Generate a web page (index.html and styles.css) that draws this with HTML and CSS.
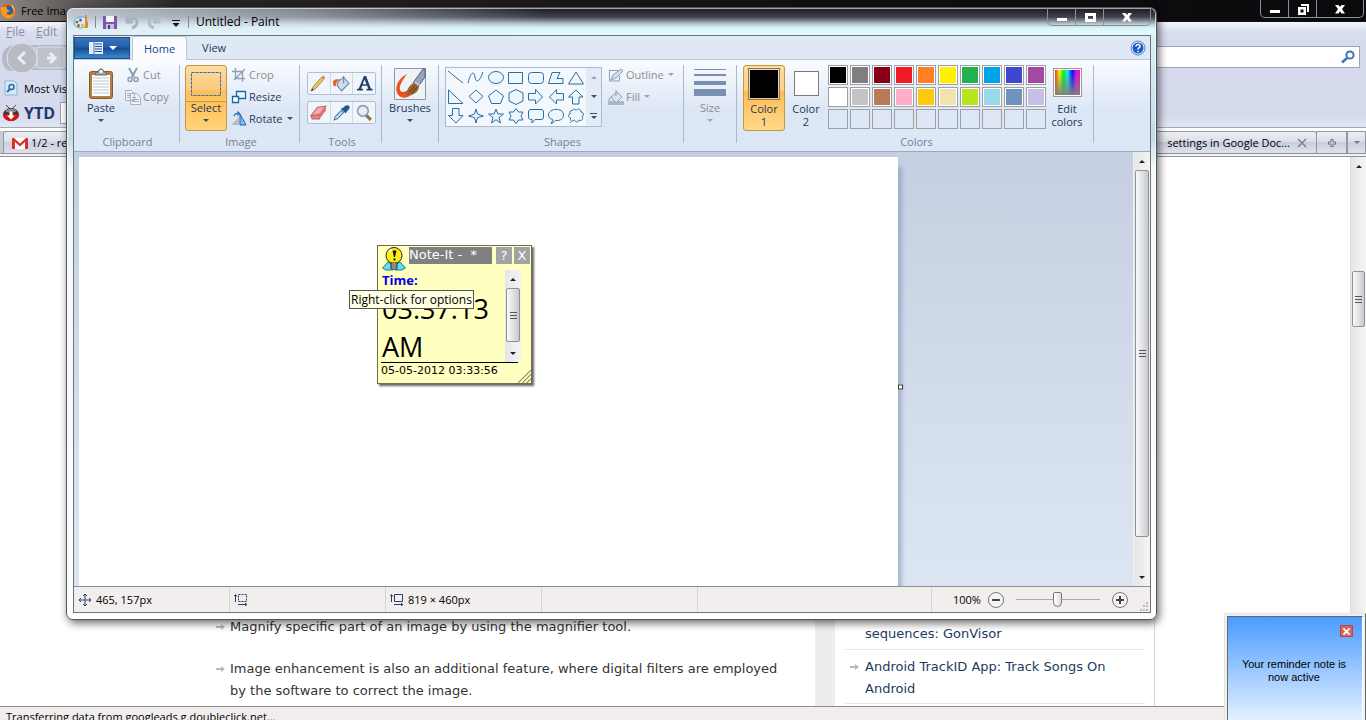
FILE: index.html
```html
<!DOCTYPE html>
<html lang="en">
<head>
    <meta charset="UTF-8">
    <meta name="viewport" content="width=device-width, initial-scale=1.0">
    <title>Untitled - Paint</title>
    <link rel="stylesheet" href="styles.css">
</head>
<body>
    <div class="browser">
        <header class="browser-title">
            <svg class="icon16" viewBox="0 0 16 16"><circle cx="8" cy="8" r="7.5" fill="#e8661a"/><circle cx="8.5" cy="7" r="4.6" fill="#2c5ea8"/><path d="M1 4C0 10 3 15 8 15.5c4 0 7-3 7.300-7-1 3-4 4.500-6.500 3.500C6 11 6.500 9 8 9l2-1C8 7 6 6 7 4 5 3 3 5 1 4z" fill="#f59a22"/><path d="M11 1c3 2 4 5 3.500 8-1-2-2-4-3.500-8z" fill="#ffd03a"/></svg>
            <span>Free Ima</span>
            <div class="window-buttons">
                <button aria-label="Minimize"><svg viewBox="0 0 14 12"><path d="M2 7h10v3H2z"/></svg></button>
                <button aria-label="Restore"><svg viewBox="0 0 14 12"><path d="M5 1h8v8h-2V3H5zM2 4h8v8H2zm2.500 2.500v3h3v-3z" fill-rule="evenodd"/></svg></button>
                <button class="close" aria-label="Close"><svg viewBox="0 0 14 12"><path d="M2 2h3.500L7 4l1.500-2H12L9 6l3 4.500H8.500L7 8.200l-1.500 2.300H2L5 6z"/></svg></button>
            </div>
        </header>
        <nav class="browser-menu">
            <a href="#file"><u>F</u>ile</a>
            <a href="#edit"><u>E</u>dit</a>
        </nav>
        <div class="browser-nav">
            <svg class="back-forward" viewBox="0 0 72 32"><path d="M18 3h54v25H18C6 32 2 24 2 16 2 8 8 2 18 3z" fill="#b6bac8"/><path d="M18 5h54v21H18z" fill="#c6cad6"/><rect x="37" y="5" width="27" height="21" rx="2" fill="#bfc2cb" stroke="#dcdfe8"/><circle cx="22" cy="16" r="15" fill="#b9bbc2" stroke="#dfe1e8"/><path d="M25 10l-6 6 6 6M50 11l5 5-5 5M47 16h8" fill="none" stroke="#eceef3" stroke-width="3"/></svg>
            <label class="search">
                <input type="text" aria-label="Search">
                <svg class="icon16" viewBox="0 0 16 16"><circle cx="10" cy="6" r="3.600" fill="none" stroke="#3b76b4" stroke-width="2"/><path d="M7 9l-5 4.500" stroke="#3b76b4" stroke-width="2.500"/></svg>
            </label>
        </div>
        <div class="bookmarks">
            <svg class="icon16" viewBox="0 0 16 16"><path d="M2 1h9l3 3v11H2z" fill="#d5e9fa" stroke="#8bb5db"/><circle cx="8.500" cy="7" r="2.500" fill="none" stroke="#33679f" stroke-width="1.500"/><path d="M7 9l-3 3" stroke="#33679f" stroke-width="2"/></svg>
            <a href="#most-visited">Most Visited</a>
        </div>
        <div class="ytd-bar">
            <svg class="icon16" viewBox="0 0 16 16"><path d="M3 0l4 4M13 0L9 4" stroke="#444"/><ellipse cx="8" cy="9.500" rx="8" ry="6.500" fill="#3a3a3c"/><path d="M2 6c3-3 9-3 12 0-3 2-9 2-12 0z" fill="#8b8b90"/><path d="M0 9.500h16c0 3-3 6.500-8 6.500s-8-3.500-8-6.500z" fill="#d11"/><path d="M6.500 6.500h3v4H12l-4 4-4-4h2.500z" fill="#fff"/></svg>
            <strong>YTD</strong>
            <input type="text" aria-label="YTD search">
        </div>
        <div class="browser-tabs">
            <div class="tab">
                <svg class="icon16" viewBox="0 0 16 16"><path d="M0 3h16v11H0z" fill="#fff"/><path d="M0 3h2l6 5.500L14 3h2v11h-3V7L8 11.500 3 7v7H0z" fill="#d9302c"/></svg>
                <span>1/2 - re</span>
            </div>
            <div class="tab last">
                <span>settings in Google Doc...</span>
                <button aria-label="Close tab"><svg viewBox="0 0 10 10"><path d="M1 1l8 8M9 1L1 9" stroke="#808080" stroke-width="1.500"/></svg></button>
            </div>
            <button class="tab-add" aria-label="New tab"><svg viewBox="0 0 10 10"><path d="M5 1v8M1 5h8" stroke="#777" stroke-width="3"/><path d="M5 2v6M2 5h6" stroke="#e4e4e4"/></svg></button>
            <button class="tab-list" aria-label="List tabs"><i class="arrow"></i></button>
        </div>
        <main class="viewport">
            <div class="page">
                <article>
                    <ul>
                        <li>Magnify specific part of an image by using the magnifier tool.</li>
                        <li>Image enhancement is also an additional feature, where digital filters are employed by the software to correct the image.</li>
                    </ul>
                </article>
                <aside>
                    <ul>
                        <li><a href="#gonvisor">sequences: GonVisor</a></li>
                        <li class="marked"><a href="#trackid">Android TrackID App: Track Songs On Android</a></li>
                    </ul>
                </aside>
            </div>
            <div class="scrollbar page-scroll">
                <button aria-label="Scroll up"><i class="arrow up"></i></button>
                <div class="thumb"><i></i></div>
            </div>
        </main>
        <footer class="browser-status">Transferring data from googleads.g.doubleclick.net...</footer>
    </div>

    <div class="paint">
        <header class="paint-title">
            <svg class="icon16" viewBox="0 0 16 16"><path d="M1 9c0-4 4-6 8-6 3 0 5 2 5 5 0 4-3 6-7 6-3 0-6-2-6-5z" fill="#d9ecf8" stroke="#6b9bc4"/><circle cx="4" cy="8" r="1.500" fill="#3b9b3b"/><circle cx="7.500" cy="6" r="1.500" fill="#2b62c9"/><circle cx="5.500" cy="11.500" r="1.500" fill="#d94b2b"/><circle cx="9.500" cy="11" r="1.500" fill="#eeb422"/><path d="M12 1h2v7h1v6h-3V8z" fill="#e78624"/></svg>
            <i class="divider"></i>
            <button aria-label="Save"><svg viewBox="0 0 16 16"><path d="M1 2h14v13H1z" fill="#7a58b0"/><path d="M4 2h8v6H4z" fill="#f5f5fb"/><path d="M4 10h8v5H4z" fill="#cbbfe4"/><path d="M6 11h2v4H6z" fill="#50348a"/></svg></button>
            <button aria-label="Undo"><svg viewBox="0 0 16 16"><path d="M3 2v6h6M4 7c4-5 9-3 9 1 0 3-2 5-5 6" fill="none" stroke="#a8b2c4" stroke-width="3"/></svg></button>
            <button aria-label="Redo"><svg viewBox="0 0 16 16"><path d="M13 2v6H7M12 7C8 2 3 4 3 8c0 3 2 5 5 6" fill="none" stroke="#b3bccb" stroke-width="3"/></svg></button>
            <button class="customize" aria-label="Customize Quick Access Toolbar"><svg viewBox="0 0 16 16"><path d="M4 6h8v1H4zM4.500 9h7L8 13z" fill="#111"/></svg></button>
            <i class="divider"></i>
            <h1>Untitled - Paint</h1>
            <div class="window-buttons">
                <button aria-label="Minimize"><svg viewBox="0 0 14 12"><path d="M2 7h10v3H2z"/></svg></button>
                <button aria-label="Maximize"><svg viewBox="0 0 14 12"><path d="M2 2h11v9H2zm3 3v3h5V5z" fill-rule="evenodd"/></svg></button>
                <button class="close" aria-label="Close"><svg viewBox="0 0 14 12"><path d="M2 2h3.500L7 4l1.500-2H12L9 6l3 4.500H8.500L7 8.200l-1.500 2.300H2L5 6z"/></svg></button>
            </div>
        </header>
        <div class="paint-body">
            <nav class="ribbon-tabs">
                <button class="file-tab" aria-label="Paint menu"><svg viewBox="0 0 16 12"><path d="M1 0h14v12H1z" fill="#e8eef8"/><path d="M7 2h7M7 4.500h7M7 7h7M7 9.500h7" stroke="#1f4f9c"/><path d="M6 0v12" stroke="#4a7ac0"/></svg><i class="arrow"></i></button>
                <a class="active" href="#home">Home</a>
                <a href="#view">View</a>
                <button class="help" aria-label="Help"><svg viewBox="0 0 16 16"><circle cx="8" cy="8" r="7" fill="#eaf2fd" stroke="#4f7fc7"/><circle cx="8" cy="8" r="5.500" fill="#1c58cd"/><path d="M6 6.500c0-3 4.500-2.500 4 0C9.700 7.700 8 7.600 8 9.500M8 10.800v1.500" fill="none" stroke="#fff" stroke-width="1.500"/></svg></button>
            </nav>
            <div class="ribbon">
                <section class="group clipboard">
                    <div class="controls">
                        <button class="big"><svg viewBox="0 0 32 32"><rect x="4.500" y="3.500" width="23" height="27" rx="2" fill="#b87e40" stroke="#8a5a2a"/><path d="M7 7h18v21H7z" fill="#fff"/><path d="M8 10h16M8 13h16M8 16h16M8 19h16M8 22h16M8 25h16" stroke="#bcc6d2"/><path d="M10 7c0-3 3-2 3.500-4 1-3 4-3 5 0 .500 2 3.500 1 3.500 4z" fill="#a5a9ae" stroke="#666"/><circle cx="16" cy="3.500" r="1.500" fill="#fff"/></svg><span>Paste</span><i class="arrow"></i></button>
                        <div class="stack">
                            <button disabled><svg viewBox="0 0 16 16"><path d="M4 1l5 9M12 1l-5 9" stroke="#8e9cb0" stroke-width="2"/><circle cx="5" cy="12.500" r="2" fill="none" stroke="#8e9cb0" stroke-width="1.500"/><circle cx="11" cy="12.500" r="2" fill="none" stroke="#8e9cb0" stroke-width="1.500"/></svg>Cut</button>
                            <button disabled><svg viewBox="0 0 16 16"><path d="M.500 1.500h6l3 3v7h-9zM5.500 4.500h6l4 4v7h-10z" fill="#eef2f8" stroke="#a6b1c4"/><path d="M2 4.500h3M2 6.500h3M2 8.500h3M7 8.500h4M7 10.500h7M7 12.500h7" stroke="#a6b1c4"/></svg>Copy</button>
                        </div>
                    </div>
                    <h2>Clipboard</h2>
                </section>
                <section class="group image">
                    <div class="controls">
                        <button class="big selected split"><svg viewBox="0 0 32 32"><rect x="1.500" y="4.500" width="29" height="23" fill="none" stroke="#2b6cab" stroke-dasharray="3 1"/></svg><span>Select</span><i class="arrow"></i></button>
                        <div class="stack">
                            <button disabled><svg viewBox="0 0 16 16"><path d="M4.500 1v10.500H14M1 4.500h10.500V15M3 13L14 2" fill="none" stroke="#8e9cb5" stroke-width="1.300"/></svg>Crop</button>
                            <button><svg viewBox="0 0 16 16"><path d="M5.500 2.500h9v7h-9z" fill="#eaf4ff" stroke="#1b65a9" stroke-width="1.300"/><path d="M1.500 7.500h6v6h-6z" fill="#fff" stroke="#1b65a9" stroke-width="1.300"/></svg>Resize</button>
                            <button><svg viewBox="0 0 16 16"><path d="M0 14l8-8v8z" fill="#b5bcc7"/><path d="M9 14V3l6 11z" fill="#7fc0ec" stroke="#1b65a9"/><path d="M3 5c1-3 3-3 5-2.500M6.500.500l2 2-2 2" fill="none" stroke="#2372be" stroke-width="1.300"/></svg>Rotate<i class="arrow"></i></button>
                        </div>
                    </div>
                    <h2>Image</h2>
                </section>
                <section class="group tools">
                    <div class="controls">
                        <div class="tool-row">
                            <button aria-label="Pencil"><svg viewBox="0 0 16 16"><path d="M1 15l2-4 8-9 2 2-8 9z" fill="#f2c94f" stroke="#8a6a32" stroke-width=".7"/><path d="M11 2l1.500-1.500 2 2L13 4z" fill="#e27862"/><path d="M1 15l1-2.500L3.500 14z" fill="#333"/></svg></button>
                            <button aria-label="Fill with color"><svg viewBox="0 0 16 16"><path d="M5 6l5-4 5 6-7 7-4-5z" fill="#c9dff1" stroke="#6f879f"/><path d="M10 8V1" stroke="#6f879f"/><path d="M0 6c2-3 6-2 8-1-4 0-5 2-5 5-3 2-3-2-3-4z" fill="#e8642c"/></svg></button>
                            <button aria-label="Text"><svg viewBox="0 0 16 16"><path d="M7.500 1h2l4.500 12h1.500v1.500H10V13h1.500l-1-3H5.800l-1 3H6.500v1.500H1V13h1.500zM8 4L6.300 8.700h3.600z" fill="#1f3e68"/></svg></button>
                        </div>
                        <div class="tool-row">
                            <button aria-label="Eraser"><svg viewBox="0 0 16 16"><path d="M1 11l6-8 8-1-6 8z" fill="#f6a8a4" stroke="#c26a68"/><path d="M1 11l8-1v4H2z" fill="#ee8581" stroke="#c26a68"/><path d="M9 10l6-8v4l-6 8z" fill="#df7470"/></svg></button>
                            <button aria-label="Color picker"><svg viewBox="0 0 16 16"><path d="M1 15l1-3 6-6 2 2-6 6z" fill="#c5e4f8" stroke="#547a9b"/><path d="M7 4l5 5 1-2 2-2c2-3-1-5-4-3L9 4z" fill="#24578f"/></svg></button>
                            <button aria-label="Magnifier"><svg viewBox="0 0 16 16"><path d="M9 10l5 5" stroke="#9a7144" stroke-width="3"/><circle cx="6.500" cy="6.500" r="5" fill="#e2f0fb" stroke="#8d9cab" stroke-width="1.500"/></svg></button>
                        </div>
                    </div>
                    <h2>Tools</h2>
                </section>
                <section class="group brushes">
                    <div class="controls">
                        <button class="big"><svg viewBox="0 0 32 32"><path d="M.500.500h31v31H.500z" fill="#eef2f5" stroke="#8d98a5"/><path d="M13 6C6 9 0 18 3 25c3 6 9 6 16 1l-4-4c-4 2-8 3-9 0-1-4 2-9 7-16z" fill="#e65322"/><path d="M19 15L29 1h2v8l-7 10z" fill="#96a5b9" stroke="#53647a"/><path d="M21 14l5 3" stroke="#e6edf4"/><path d="M12 27c1-6 4-11 8-12l5 4c-1 6-7 9-13 8z" fill="#9b6230"/><path d="M15 24l6-6M18 25l5-6" stroke="#623712"/></svg><span>Brushes</span><i class="arrow"></i></button>
                    </div>
                </section>
                <section class="group shapes">
                    <div class="controls">
                        <div class="gallery">
                            <div class="shape-grid">
                                <button aria-label="Line"><svg viewBox="0 0 18 18"><path d="M1 2l15 12"/></svg></button>
                                <button aria-label="Curve"><svg viewBox="0 0 18 18"><path d="M1 14C4 2 7 2 8 8s4 6 8-5"/></svg></button>
                                <button aria-label="Oval"><svg viewBox="0 0 18 18"><ellipse cx="9" cy="8.500" rx="7.500" ry="6"/></svg></button>
                                <button aria-label="Rectangle"><svg viewBox="0 0 18 18"><path d="M1.500 3.500h14v11h-14z"/></svg></button>
                                <button aria-label="Rounded rectangle"><svg viewBox="0 0 18 18"><rect x="1.500" y="3.500" width="15" height="11" rx="3"/></svg></button>
                                <button aria-label="Polygon"><svg viewBox="0 0 18 18"><path d="M5 3.500h8l-3 6h6v5H1.500z"/></svg></button>
                                <button aria-label="Triangle"><svg viewBox="0 0 18 18"><path d="M9 3l7.500 12h-15z"/></svg></button>
                                <button aria-label="Right triangle"><svg viewBox="0 0 18 18"><path d="M1.500 2v13.500H16z"/></svg></button>
                                <button aria-label="Diamond"><svg viewBox="0 0 18 18"><path d="M9 2l7 6.500L9 15 2 8.500z"/></svg></button>
                                <button aria-label="Pentagon"><svg viewBox="0 0 18 18"><path d="M9 2l7.500 6-3 7.500h-9L1.500 8z"/></svg></button>
                                <button aria-label="Hexagon"><svg viewBox="0 0 18 18"><path d="M9 1.500L16 5v8l-7 3.500L2 13V5z"/></svg></button>
                                <button aria-label="Right arrow"><svg viewBox="0 0 18 18"><path d="M1.500 5.500h7v-4l7 7.500-7 7v-4h-7z"/></svg></button>
                                <button aria-label="Left arrow"><svg viewBox="0 0 18 18"><path d="M16.500 5.500h-7v-4L2.500 9l7 7v-4h7z"/></svg></button>
                                <button aria-label="Up arrow"><svg viewBox="0 0 18 18"><path d="M5.500 16V9h-4L9 2l7 7h-4v7z"/></svg></button>
                                <button aria-label="Down arrow"><svg viewBox="0 0 18 18"><path d="M5.500 1.500v7h-4L9 16l7-7.500h-4v-7z"/></svg></button>
                                <button aria-label="Four-point star"><svg viewBox="0 0 18 18"><path d="M9 2l1.500 5 6 2-6 1.500L9 16l-1.500-5.500-6-1.500 6-2z"/></svg></button>
                                <button aria-label="Five-point star"><svg viewBox="0 0 18 18"><path d="M9 2l1.800 5h5.700L12 10.500l1.500 5.500L9 12.700 4.500 16 6 10.500 1.500 7h5.700z"/></svg></button>
                                <button aria-label="Six-point star"><svg viewBox="0 0 18 18"><path d="M9 1.500L11.500 5H16l-2 4 2 4h-4.500L9 16.500 6.500 13H2l2-4-2-4h4.500z"/></svg></button>
                                <button aria-label="Rounded callout"><svg viewBox="0 0 18 18"><path d="M4 2.500h10c2 0 2.500 1 2.500 2.500v5c0 2-1 2.500-2.500 2.500H8L5 16v-3.500c-2 0-3.500 0-3.500-2.500V5c0-2 1-2.500 2.500-2.500z"/></svg></button>
                                <button aria-label="Oval callout"><svg viewBox="0 0 18 18"><path d="M6 13L4 16.500c1 0 3-1.500 4.500-3 5 .500 8-2 8-5.500 0-8-15-7-15 0 0 2 2 4 4.500 5z"/></svg></button>
                                <button aria-label="Cloud callout"><svg viewBox="0 0 18 18"><path d="M5 4c1-3 4-2 4-.500C11 1 14 2 14 5c3 0 3 4 1 4.500 2 3-1 5-3 3.500-1 3-4 2-4.500 0-2 2-5 1-4-2-3-1-2.500-4 0-4.500C2 5 3 3 5 4zM3.500 15v1"/></svg></button>
                            </div>
                            <div class="gallery-scroll">
                                <button aria-label="Row up" disabled><i class="arrow up"></i></button>
                                <button aria-label="Row down"><i class="arrow"></i></button>
                                <button class="more" aria-label="More shapes"><i class="arrow"></i></button>
                            </div>
                        </div>
                        <div class="stack">
                            <button disabled><svg viewBox="0 0 16 16"><path d="M1.500 3.500h9M1.500 3v11h10V9" fill="none" stroke="#8fa0b8"/><path d="M3 13l2-5 8-6 2 2-7 7z" fill="#d4dce7" stroke="#8fa0b8"/></svg>Outline<i class="arrow"></i></button>
                            <button disabled><svg viewBox="0 0 16 16"><path d="M0 12h16v4H0z" fill="#a9b6cb"/><path d="M3 8l6-5 5 5-6 6z" fill="#dce3ed" stroke="#8fa0b8"/><path d="M8 7V1M3 8c-2 1-2 3-2 4" stroke="#8fa0b8" fill="none"/></svg>Fill<i class="arrow"></i></button>
                        </div>
                    </div>
                    <h2>Shapes</h2>
                </section>
                <section class="group size">
                    <div class="controls">
                        <button class="big" disabled><svg viewBox="0 0 32 32"><path d="M0 1h32v1H0zM0 6h32v2H0zM0 13h32v4H0zM0 21h32v7H0z" fill="#7b8fb2"/></svg><span>Size</span><i class="arrow"></i></button>
                    </div>
                </section>
                <section class="group colors">
                    <div class="controls">
                        <button class="big selected"><i class="well first"></i><span>Color<br>1</span></button>
                        <button class="big"><i class="well second"></i><span>Color<br>2</span></button>
                        <div class="palette">
                            <button class="black" aria-label="Black"></button>
                            <button class="gray" aria-label="Gray"></button>
                            <button class="dark-red" aria-label="Dark red"></button>
                            <button class="red" aria-label="Red"></button>
                            <button class="orange" aria-label="Orange"></button>
                            <button class="yellow" aria-label="Yellow"></button>
                            <button class="green" aria-label="Green"></button>
                            <button class="turquoise" aria-label="Turquoise"></button>
                            <button class="indigo" aria-label="Indigo"></button>
                            <button class="purple" aria-label="Purple"></button>
                            <button class="white" aria-label="White"></button>
                            <button class="light-gray" aria-label="Light gray"></button>
                            <button class="brown" aria-label="Brown"></button>
                            <button class="rose" aria-label="Rose"></button>
                            <button class="gold" aria-label="Gold"></button>
                            <button class="light-yellow" aria-label="Light yellow"></button>
                            <button class="lime" aria-label="Lime"></button>
                            <button class="light-turquoise" aria-label="Light turquoise"></button>
                            <button class="blue-gray" aria-label="Blue-gray"></button>
                            <button class="lavender" aria-label="Lavender"></button>
                            <button aria-label="Custom 1"></button>
                            <button aria-label="Custom 2"></button>
                            <button aria-label="Custom 3"></button>
                            <button aria-label="Custom 4"></button>
                            <button aria-label="Custom 5"></button>
                            <button aria-label="Custom 6"></button>
                            <button aria-label="Custom 7"></button>
                            <button aria-label="Custom 8"></button>
                            <button aria-label="Custom 9"></button>
                            <button aria-label="Custom 10"></button>
                        </div>
                        <button class="big"><i class="spectrum"></i><span>Edit<br>colors</span></button>
                    </div>
                    <h2>Colors</h2>
                </section>
            </div>
            <div class="workspace">
                <div class="canvas-area">
                    <div class="canvas"><i class="handle"></i></div>
                </div>
                <div class="scrollbar canvas-scroll">
                    <button aria-label="Scroll up"><i class="arrow up"></i></button>
                    <div class="thumb"><i></i></div>
                    <button aria-label="Scroll down"><i class="arrow"></i></button>
                </div>
            </div>
            <footer class="paint-status">
                <div class="cell"><svg viewBox="0 0 12 12"><path d="M6 0v12M0 6h12M4 2l2-2 2 2M4 10l2 2 2-2M2 4L0 6l2 2M10 4l2 2-2 2" fill="none" stroke="#2d4260"/></svg>465, 157px</div>
                <div class="cell"><svg viewBox="0 0 14 12"><path d="M1.500 1v7M0 2.500l1.500-2 1.500 2M4 10.500h8M11 9l2 1.500-2 1.500" fill="none" stroke="#2d4260"/><path d="M4.500.500h8v7h-8z" fill="none" stroke="#2d4260" stroke-dasharray="2 1"/></svg></div>
                <div class="cell"><svg viewBox="0 0 14 12"><path d="M1.500 1v7M0 2.500l1.500-2 1.500 2M4 10.500h8M11 9l2 1.500-2 1.500M4.500.500h8v7h-8z" fill="none" stroke="#2d4260"/></svg>819 × 460px</div>
                <div class="cell"></div>
                <div class="cell wide"></div>
                <div class="zoom">
                    <label for="zoom">100%</label>
                    <button aria-label="Zoom out"><svg viewBox="0 0 16 16"><circle cx="8" cy="8" r="7.500" fill="#f4f4f4" stroke="#777"/><path d="M4 7h8v2H4z" fill="#444"/></svg></button>
                    <input type="range" id="zoom" min="0" max="100" value="50">
                    <button aria-label="Zoom in"><svg viewBox="0 0 16 16"><circle cx="8" cy="8" r="7.500" fill="#f4f4f4" stroke="#777"/><path d="M4 7h3V4h2v3h3v2H9v3H7V9H4z" fill="#444"/></svg></button>
                    <svg class="grip" viewBox="0 0 10 10"><path d="M7 0h2v2H7zM4 3h2v2H4zM7 3h2v2H7zM1 7h2v2H1zM4 7h2v2H4zM7 7h2v2H7z" fill="#bbb"/></svg>
                </div>
            </footer>
        </div>
    </div>

    <div class="note">
        <header>
            <svg viewBox="0 0 24 24"><path d="M.500 21L6 15l5 3v5H4zM23.500 21L18 15l-5 3v5h7z" fill="#5fe0ee" stroke="#157c8a"/><circle cx="12" cy="8.500" r="8" fill="#ffee10" stroke="#222"/><path d="M9 16h6v6H9z" fill="#ddd" stroke="#333"/><path d="M9 18h6M9 20h6" stroke="#333"/><path d="M7 5c1-2 2-2 3-2" fill="none" stroke="#fff" stroke-width="2"/><path d="M10.500 3.500h4L13 10h-1zM11.500 11.500h2v2h-2z" fill="#111"/></svg>
            <h2>Note-It -&nbsp; *</h2>
            <button aria-label="Help">?</button>
            <button aria-label="Close">X</button>
        </header>
        <div class="note-content">
            <div class="note-text">
                <h3>Time:</h3>
                <p>03:37:13 AM</p>
            </div>
            <div class="scrollbar note-scroll">
                <button aria-label="Scroll up"><i class="arrow up"></i></button>
                <div class="thumb"><i></i></div>
                <button aria-label="Scroll down"><i class="arrow"></i></button>
            </div>
        </div>
        <footer>
            <time>05-05-2012 03:33:56</time>
            <svg viewBox="0 0 12 12"><path d="M0 12L12 0M4 12l8-8M8 12l4-4" stroke="#8a8a60"/></svg>
        </footer>
    </div>
    <div class="tooltip" role="tooltip">Right-click for options</div>

    <div class="reminder">
        <div class="reminder-body">
            <button aria-label="Close"><svg viewBox="0 0 10 10"><path d="M1.500 1.500l7 7M8.500 1.500l-7 7" stroke="#fff" stroke-width="2"/></svg></button>
            <p>Your reminder note is now active</p>
        </div>
    </div>
</body>
</html>
```
FILE: styles.css
```css
* {
    box-sizing: border-box;
}
body {
    position: relative;
    height: 100vh;
    margin: 0;
    overflow: hidden;
    font-family: "Open Sans", "Noto Sans", sans-serif;
    font-size: 11px;
    color: #000;
}
button {
    display: flex;
    align-items: center;
    justify-content: center;
    margin: 0;
    padding: 0;
    border: 0;
    background: none;
    font: inherit;
    color: inherit;
}
a {
    color: inherit;
    text-decoration: none;
}
h1, h2, h3, p, ul {
    margin: 0;
    padding: 0;
    font-size: inherit;
    font-weight: normal;
}
ul {
    list-style: none;
}
svg {
    flex: none;
}
.icon16 {
    width: 16px;
    height: 16px;
}
.arrow {
    flex: none;
    width: 0;
    height: 0;
    border: 3px solid transparent;
    border-top-color: #444e63;
    border-bottom-width: 0;
}
.arrow.up {
    border-top-width: 0;
    border-bottom: 3px solid #444e63;
}
button:disabled {
    color: #8b8e94;
}
button:disabled .arrow {
    border-top-color: #9aa5b8;
}
button:disabled .arrow.up {
    border-bottom-color: #9aa5b8;
}

/* window buttons */
.window-buttons {
    display: flex;
    align-self: flex-start;
    height: 18px;
    margin-left: auto;
    border: 1px solid #8c9097;
    border-top: 0;
    border-radius: 0 0 5px 5px;
}
.window-buttons button {
    width: 28px;
    border-right: 1px solid #8c9097;
}
.window-buttons button.close {
    width: 46px;
    border-right: 0;
}
.window-buttons svg {
    width: 14px;
    height: 12px;
    fill: #fff;
}

/* scrollbars */
.scrollbar {
    display: flex;
    flex-direction: column;
    flex: none;
    width: 16px;
    background: linear-gradient(90deg, #e6e6e6, #f4f4f4);
}
.scrollbar button {
    height: 18px;
}
.scrollbar button:last-child {
    margin-top: auto;
}
.scrollbar .arrow {
    border-top-color: #222;
}
.scrollbar .arrow.up {
    border-bottom-color: #222;
}
.thumb {
    display: flex;
    align-items: center;
    justify-content: center;
    margin: 0 1px;
    border: 1px solid #8f9297;
    border-radius: 2px;
    background: linear-gradient(90deg, #f8f8f8, #e2e3e5 50%, #c7c9cd);
}
.thumb i {
    width: 7px;
    height: 7px;
    background: repeating-linear-gradient(#555 0 1px, transparent 1px 3px);
}

/* browser */
.browser {
    display: flex;
    flex-direction: column;
    height: 100%;
    background: #d5daed;
}
.browser-title {
    display: flex;
    align-items: center;
    gap: 5px;
    height: 22px;
    padding-right: 2px;
    border-bottom: 1px solid #111;
    background: linear-gradient(90deg, #8f8b8a, #66605e 60px, #2a2527 180px, #121012 60%, #0a090b);
    white-space: nowrap;
}
.browser-menu {
    display: flex;
    gap: 11px;
    height: 20px;
    padding: 0 6px;
    background: linear-gradient(#f4f7fc, #d9deef 10px, #d5daed);
    color: #8d8f96;
    font-size: 12px;
    line-height: 20px;
}
.browser-nav {
    display: flex;
    align-items: center;
    justify-content: space-between;
    height: 35px;
    padding-right: 6px;
    padding-bottom: 3px;
}
.back-forward {
    width: 72px;
    height: 32px;
}
.search {
    display: flex;
    align-items: center;
    width: 320px;
    height: 22px;
    margin-bottom: 2px;
    padding-right: 3px;
    border: 1px solid #a0a3ad;
    background: #fff;
}
.search input {
    flex: 1;
    min-width: 0;
    border: 0;
    background: none;
}
.bookmarks {
    display: flex;
    align-items: center;
    gap: 5px;
    height: 22px;
    padding-left: 3px;
}
.ytd-bar {
    display: flex;
    align-items: center;
    gap: 5px;
    height: 29px;
    padding-left: 3px;
    border-bottom: 1px solid #a4a8b6;
    background: linear-gradient(#d5daed 60%, #e3e8f6);
}
.ytd-bar strong {
    color: #1d3b70;
    font-size: 16px;
}
.ytd-bar input {
    width: 200px;
    height: 22px;
    border: 1px solid #a0a3ad;
}
.browser-tabs {
    display: flex;
    height: 29px;
    padding: 3px 0 3px 3px;
    border-bottom: 1px solid #8f929a;
    background: linear-gradient(#fdfdfe 0 3px, #c9cbd2 3px 25px, #8f929a 25px 26px, #f4f4f6 26px);
}
.browser-tabs .tab, .tab-add, .tab-list {
    display: flex;
    align-items: center;
    border: 1px solid #93969f;
    border-bottom: 0;
    background: linear-gradient(#eceef4, #dcdfe9 45%, #c8cde0 50%, #e0e2ea);
}
.browser-tabs .tab {
    flex: 1;
    gap: 3px;
    padding: 0 8px;
    border-radius: 3px 3px 0 0;
}
.browser-tabs .tab.last {
    justify-content: flex-end;
    gap: 7px;
    padding-right: 9px;
    border-right: 0;
}
.tab button svg, .tab-add svg {
    width: 10px;
    height: 10px;
}
.tab-add {
    width: 31px;
}
.tab-list {
    width: 19px;
}
.tab-list .arrow {
    border-top-color: #777;
}
.viewport {
    display: flex;
    flex: 1;
    min-height: 0;
    background: #fff;
}
.page {
    display: flex;
    flex: 1;
    padding-left: 212px;
    font-family: "DejaVu Sans", sans-serif;
    font-size: 13px;
    line-height: 22px;
}
article, aside {
    display: flex;
    flex-direction: column;
    justify-content: flex-end;
}
article {
    flex: 0 1 603px;
    padding: 0 24px 4px 0;
    color: #333;
}
article li {
    padding-left: 18px;
}
article li + li {
    margin-top: 20px;
}
article li, aside li.marked {
    background: url("data:image/svg+xml,%3Csvg xmlns='http://www.w3.org/2000/svg' width='9' height='8'%3E%3Cpath d='M0 3h5V1l4 3-4 3V5H0z' fill='%23b9b9b9'/%3E%3C/svg%3E") 4px 7px no-repeat;
}
aside {
    flex: 0 1 340px;
    padding: 0 9px 2px 10px;
    border-left: 20px solid #ededed;
    border-right: 1px solid #d8d8d8;
    color: #1b3b5e;
}
aside li {
    padding: 5px 24px 4px 20px;
    border-bottom: 1px solid #e6e6e6;
}
aside li.marked {
    padding-top: 6px;
    padding-bottom: 3px;
    background-position: 5px 13px;
}
.page-scroll {
    border-left: 1px solid #ddd;
}
.page-scroll .thumb {
    flex: 0 0 56px;
    margin-top: 96px;
}
.browser-status {
    height: 14px;
    padding: 1px 6px;
    border-top: 1px solid #8c8c8c;
    background: #f0edec;
    line-height: 18px;
    overflow: hidden;
}

/* paint window */
.paint {
    position: absolute;
    top: 7px;
    right: 209px;
    bottom: 100px;
    left: 66px;
    display: flex;
    flex-direction: column;
    padding: 0 5px 6px 6px;
    border: 1px solid #50565c;
    border-radius: 7px;
    background:
        linear-gradient(90deg, rgba(225, 235, 245, 0.8), rgba(225, 235, 245, 0.5) 240px, transparent 480px) top / 100% 27px no-repeat,
        linear-gradient(#1a1a20, #3f434b 9px, #b9c5d2 16px, #d9f7f7 20px, #e2fbfb 27px) top / 100% 27px no-repeat,
        linear-gradient(#dcf8fa, #c6dbe8 130px, #f4fafb 160px, #fdfefe);
    box-shadow: inset 0 0 0 1px rgba(255, 255, 255, 0.6), 2px 3px 8px rgba(0, 0, 0, 0.6);
}
.paint-title {
    display: flex;
    align-items: center;
    gap: 6px;
    height: 27px;
}
.paint-title h1 {
    margin-left: 1px;
    font-size: 12px;
}
.paint-title button svg {
    width: 16px;
    height: 16px;
}
.paint-title .customize {
    margin-right: -2px;
}
.paint-title .window-buttons button svg {
    width: 14px;
    height: 12px;
}
.divider {
    width: 1px;
    height: 12px;
    background: #888;
}
.paint-body {
    display: flex;
    flex-direction: column;
    flex: 1;
    min-height: 0;
    border: 1px solid #6b737c;
}
.ribbon-tabs {
    display: flex;
    align-items: center;
    height: 24px;
    border-bottom: 1px solid #bac9dd;
    background: #dfe9f5;
    color: #1e395b;
}
.ribbon-tabs a {
    height: 23px;
    padding: 0 12px;
    line-height: 24px;
}
.ribbon-tabs a.active {
    height: 24px;
    margin: 1px 3px 0 2px;
    padding: 0 11px;
    border: 1px solid #bac9dd;
    border-bottom: 0;
    border-radius: 3px 3px 0 0;
    background: #fafcff;
    color: #15428b;
}
.file-tab {
    gap: 5px;
    width: 56px;
    height: 22px;
    border: 1px solid #1c4a8c;
    background: linear-gradient(#3a73bd, #2560ab 45%, #154a93 50%, #3a8bd0);
}
.file-tab svg {
    width: 16px;
    height: 12px;
}
.file-tab .arrow {
    border-width: 4px 4px 0;
    border-top-color: #fff;
}
.help {
    margin-left: auto;
    margin-right: 4px;
}
.help svg {
    width: 16px;
    height: 16px;
}
.ribbon {
    display: flex;
    flex: none;
    height: 92px;
    padding-top: 5px;
    border-bottom: 1px solid #9dabc0;
    background: linear-gradient(#f9fcff, #e9f0f9 28px, #dce6f4 50px, #dde8f6);
    color: #1e395b;
}
.group {
    background: linear-gradient(#aab8d0, #aab8d0) right 1px top / 1px 78px no-repeat;
}
.group h2 {
    color: #758096;
    line-height: 22px;
    text-align: center;
}
.controls {
    display: flex;
    gap: 4px;
    height: 66px;
    padding-left: 4px;
}
.clipboard {
    width: 107px;
}
.clipboard .controls {
    gap: 3px;
    padding-left: 6px;
}
.image {
    width: 120px;
}
.tools {
    width: 82px;
}
.brushes {
    width: 57px;
}
.brushes .controls {
    padding-left: 5px;
}
.shapes {
    width: 245px;
}
.shapes .controls {
    gap: 6px;
    padding-left: 5px;
}
.size {
    width: 53px;
}
.colors {
    width: 357px;
}
.colors .controls {
    gap: 0;
    padding-left: 5px;
}
.big {
    flex-direction: column;
    justify-content: flex-start;
    width: 42px;
    height: 66px;
    padding-top: 2px;
    border: 1px solid transparent;
    border-radius: 3px;
    line-height: 13px;
}
.brushes .big {
    width: 44px;
}
.big svg {
    width: 32px;
    height: 32px;
    margin-bottom: 1px;
}
.big .arrow {
    margin-top: 5px;
}
.selected {
    border-color: #c29b3c;
    background: linear-gradient(#fddba2, #fcd08c 38%, #fdbd55 40%, #ffd98a);
}
.split {
    background: linear-gradient(#fddba2, #fcca7c 24px, #fdbd55 25px, #ffc766 35px, #c29b3c 35px 36px, #ffc35c 36px, #ffd27a);
}
.stack {
    display: flex;
    flex-direction: column;
}
.stack button {
    justify-content: flex-start;
    gap: 2px;
    height: 22px;
    padding-bottom: 3px;
}
.stack svg {
    width: 16px;
    height: 16px;
}
.stack .arrow {
    margin-left: 2px;
}
.tools .controls {
    flex-direction: column;
    gap: 6px;
    padding: 7px 6px 0;
}
.tool-row {
    display: flex;
    width: 69px;
    height: 23px;
    border: 1px solid #b0bfd6;
    border-radius: 2px;
    background: #f0f5fb;
}
.tool-row button {
    flex: 1;
}
.tool-row button + button {
    border-left: 1px solid #cfd9e8;
}
.tool-row svg {
    width: 17px;
    height: 17px;
}
.gallery {
    display: flex;
    height: 60px;
    margin-top: 2px;
    border: 1px solid #a9bcd6;
    background: #f4f8fc;
}
.shape-grid {
    display: grid;
    grid-template-columns: repeat(7, 20px);
}
.shape-grid svg {
    width: 18px;
    height: 18px;
    fill: #edf6fa;
    stroke: #2c6eac;
}
.shape-grid button:nth-child(-n+2) svg {
    fill: none;
}
.gallery-scroll {
    display: flex;
    flex-direction: column;
    width: 15px;
    background: #e3ebf6;
}
.gallery-scroll button {
    flex: 1;
}
.gallery-scroll .more {
    flex-direction: column;
    gap: 2px;
}
.more::before {
    width: 7px;
    height: 1px;
    background: #444e63;
    content: "";
}
.well {
    flex: none;
    border: 1px solid #7a7a7a;
}
.well.first {
    width: 32px;
    height: 32px;
    margin-bottom: 2px;
    padding: 1px;
    background: #000 content-box;
}
.well.second {
    width: 25px;
    height: 25px;
    margin: 3px 0 6px;
    background: #fff;
}
.palette {
    display: grid;
    grid-template-columns: repeat(10, 20px);
    grid-auto-rows: 20px;
    gap: 2px;
    margin: 0 0 0 1px;
}
.palette button {
    padding: 1px;
    border: 1px solid #a0a0a0;
    background-clip: content-box;
}
.palette button:nth-child(-n+20) {
    box-shadow: inset 0 0 0 1px #fff;
}
.black { background-color: #000; }
.gray { background-color: #7f7f7f; }
.dark-red { background-color: #880015; }
.red { background-color: #ed1c24; }
.orange { background-color: #ff7f27; }
.yellow { background-color: #fff200; }
.green { background-color: #22b14c; }
.turquoise { background-color: #00a2e8; }
.indigo { background-color: #3f48cc; }
.purple { background-color: #a349a4; }
.white { background-color: #fff; }
.light-gray { background-color: #c3c3c3; }
.brown { background-color: #b97a57; }
.rose { background-color: #ffaec9; }
.gold { background-color: #ffc90e; }
.light-yellow { background-color: #efe4b0; }
.lime { background-color: #b5e61d; }
.light-turquoise { background-color: #99d9ea; }
.blue-gray { background-color: #7092be; }
.lavender { background-color: #c8bfe7; }
.spectrum {
    flex: none;
    width: 29px;
    height: 29px;
    margin-bottom: 5px;
    border: 1px solid #999;
    outline: 1px solid #fff;
    outline-offset: -2px;
    background: linear-gradient(transparent, #808080), linear-gradient(90deg, red, #ff0 20%, #0f0 35%, #0ff 50%, #00f 68%, #f0f 85%, #f06);
}
.workspace {
    display: flex;
    flex: 1;
    min-height: 0;
}
.canvas-area {
    flex: 1;
    min-width: 0;
    padding: 5px;
    overflow: hidden;
    background: linear-gradient(#c6cfe1, #dce6f3);
}
.canvas {
    position: relative;
    width: 819px;
    height: 460px;
    background: #fff;
    box-shadow: 5px 9px 4px -1px rgba(120, 140, 175, 0.5);
}
.handle {
    position: absolute;
    top: 50%;
    left: 100%;
    width: 5px;
    height: 5px;
    border: 1px solid #333;
    background: #fff;
    transform: translateY(-50%);
}
.canvas-scroll {
    width: 17px;
    border-left: 1px solid #eef2f7;
}
.canvas-scroll .thumb {
    flex: 0 1 367px;
}
.paint-status {
    display: flex;
    height: 26px;
    border-top: 1px solid #8a8d91;
    background: #f1eeed;
}
.cell {
    display: flex;
    flex: 0 1 156px;
    align-items: center;
    gap: 4px;
    padding-left: 4px;
    border-right: 1px solid #d4d4d4;
}
.cell.wide {
    flex: 1;
}
.cell svg {
    width: 14px;
    height: 12px;
}
.zoom {
    display: flex;
    flex: 0 0 218px;
    align-items: center;
    gap: 7px;
    padding-left: 21px;
}
.zoom button svg {
    width: 16px;
    height: 16px;
}
.zoom input {
    width: 84px;
    height: 18px;
    margin: 0 5px;
    appearance: none;
    background: linear-gradient(#aaa, #aaa) center / 100% 1px no-repeat;
}
.zoom input::-webkit-slider-thumb {
    width: 9px;
    height: 15px;
    appearance: none;
    border: 1px solid #777;
    border-radius: 2px 2px 5px 5px;
    background: linear-gradient(90deg, #fff, #ddd);
}
.grip {
    align-self: flex-end;
    width: 10px;
    height: 10px;
    margin-left: 4px;
}

/* sticky note */
.note {
    position: absolute;
    top: 245px;
    left: 377px;
    width: 155px;
    border: 1px solid #6e6e50;
    background: #ffffc0;
    box-shadow: 2px 2px 2px rgba(0, 0, 0, 0.6);
    font-family: "DejaVu Sans", sans-serif;
}
.note header {
    display: flex;
    gap: 2px;
    height: 24px;
    padding: 1px 1px 0 4px;
}
.note header svg {
    width: 24px;
    height: 24px;
}
.note header h2, .note header button {
    height: 17px;
    background: #808080;
    color: #fff;
    font-size: 13px;
    line-height: 16px;
}
.note header h2 {
    flex: 1;
    margin: 0 2px 0 1px;
    white-space: nowrap;
}
.note header button {
    width: 16px;
    background: #a3a3a3;
}
.note-content {
    display: flex;
    height: 92px;
    margin: 0 10px 0 3px;
}
.note-text {
    flex: 1;
    padding-left: 1px;
    font-family: "Comic Sans MS", "Open Sans", sans-serif;
}
.note-text h3 {
    color: #0000f0;
    font-size: 13px;
    font-weight: bold;
    line-height: 20px;
}
.note-text p {
    font-size: 27px;
    font-weight: 500;
    line-height: 38px;
}
.note-scroll .thumb {
    flex: 0 0 54px;
}
.note footer {
    display: flex;
    align-items: center;
    justify-content: space-between;
    height: 21px;
    padding-left: 3px;
    background: linear-gradient(#000, #000) 3px 0 / 137px 1px no-repeat;
    line-height: 16px;
}
.note footer svg {
    align-self: flex-end;
    width: 13px;
    height: 13px;
}
.note time {
    padding-bottom: 3px;
}
.tooltip {
    position: absolute;
    top: 290px;
    left: 349px;
    padding: 0 1px;
    border: 1px solid #555;
    background: #ffffe1;
    font-size: 12px;
    line-height: 17px;
    white-space: nowrap;
}

/* reminder popup */
.reminder {
    position: absolute;
    right: 0;
    bottom: 0;
    width: 142px;
    height: 107px;
    padding: 2px 2px 0;
    border: 1px solid #e3e3e3;
    border-right-color: #666;
    border-bottom: 0;
    background: #f0f0f0;
    font-family: "Liberation Sans", Arial, sans-serif;
}
.reminder-body {
    display: flex;
    flex-direction: column;
    height: 100%;
    padding: 8px 9px 0 7px;
    border: 1px solid #666;
    border-right-color: #fff;
    border-bottom: 0;
    background: linear-gradient(#4a9bff, #e4f1ff);
    text-align: center;
}
.reminder-body button {
    align-self: flex-end;
    width: 13px;
    height: 12px;
    border: 1px solid #b9474a;
    background: #d9605c;
}
.reminder-body svg {
    width: 9px;
    height: 9px;
}
.reminder-body p {
    margin-top: 21px;
    padding: 0 6px;
    line-height: 13px;
}
```
